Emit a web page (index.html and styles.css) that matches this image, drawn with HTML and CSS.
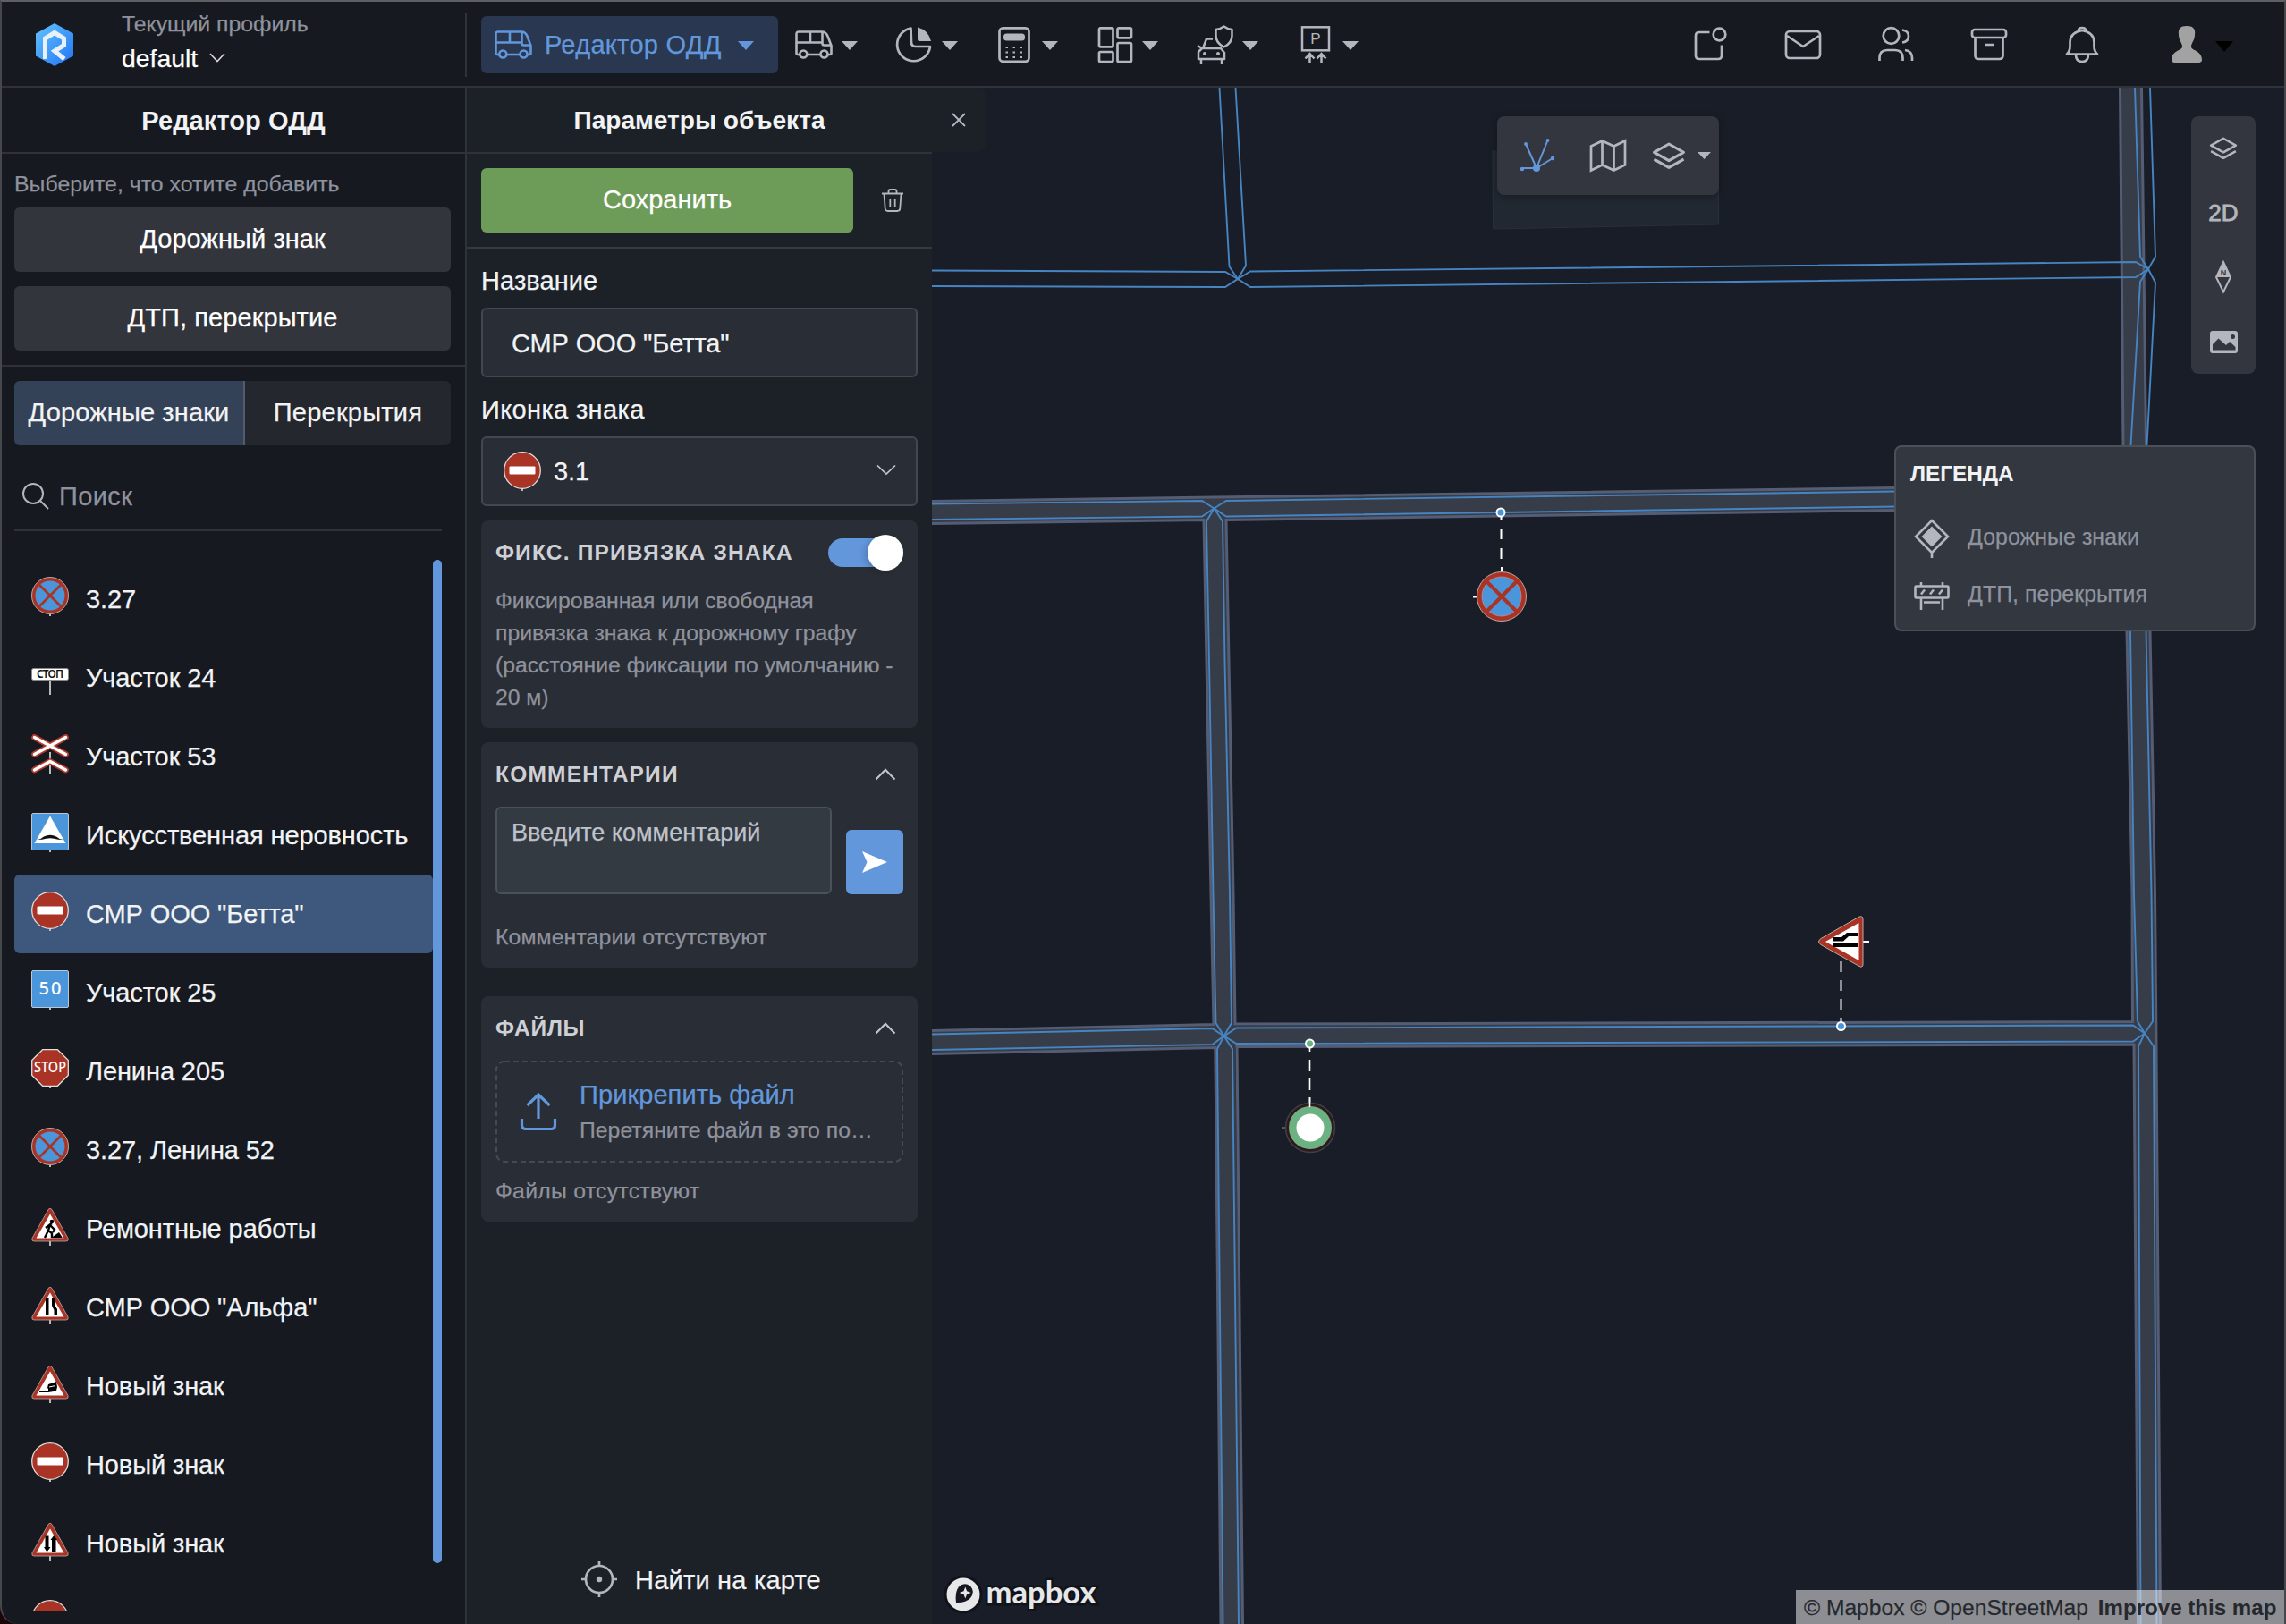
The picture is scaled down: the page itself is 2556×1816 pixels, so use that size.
FILE: index.html
```html
<!DOCTYPE html>
<html lang="ru">
<head>
<meta charset="utf-8">
<title>Редактор ОДД</title>
<link rel="stylesheet" href="styles.css">
</head>
<body>
<svg class="defs" aria-hidden="true">
  <defs>
    <linearGradient id="logo-fill" x1="0" y1="0" x2="1" y2="1">
      <stop offset="0" stop-color="#62c4ff"/><stop offset="1" stop-color="#2273f4"/>
    </linearGradient>
    <symbol id="bus" viewBox="0 0 42 32">
      <g fill="none" stroke="currentColor" stroke-width="2.6" stroke-linejoin="round">
        <path d="M5 27H3q-1.500 0-1.500-1.500V4q0-2.500 2.500-2.500H30q4.500 0 6.500 5L40.500 17v8.500q0 1.500-1.500 1.500H37M13.500 27H28M1.500 13.500H30M17 1.500v12M30.500 1.500v13q0 2 2 2H40"/>
        <circle cx="9.300" cy="26.500" r="4"/><circle cx="32.500" cy="26.500" r="4"/>
      </g>
    </symbol>
    <symbol id="layers" viewBox="0 0 36 30">
      <path d="M18 2 34 11 18 20 2 11ZM2 18.500 18 27.500 34 18.500" fill="none" stroke="currentColor" stroke-width="2.900" stroke-linejoin="round"/>
    </symbol>
    <symbol id="s-nostop" viewBox="0 0 42 44">
      <path d="M21 40v4" stroke="#b9b9b9" stroke-width="2"/>
      <circle cx="21" cy="21" r="20.500" fill="#a93426" stroke="#b8aaa6"/>
      <circle cx="21" cy="21" r="16.500" fill="#4b96da"/>
      <path d="M9 9 33 33M33 9 9 33" stroke="#a93426" stroke-width="2.700"/>
    </symbol>
    <symbol id="s-noentry" viewBox="0 0 42 44">
      <path d="M21 40v4" stroke="#b9b9b9" stroke-width="2"/>
      <circle cx="21" cy="21" r="20.300" fill="#a93426" stroke="#ddd" stroke-width="1.300"/>
      <rect x="6.500" y="16.500" width="29" height="9" rx="1" fill="#fff"/>
    </symbol>
    <symbol id="s-stopline" viewBox="0 0 42 44">
      <path d="M21 27v17" stroke="#b9b9b9" stroke-width="2"/>
      <rect x=".5" y="14.500" width="41" height="13" rx="2" fill="#fff" stroke="#888"/>
      <text x="21" y="25.200" class="sign-text" font-size="12" fill="#111" text-anchor="middle" textLength="30">СТОП</text>
    </symbol>
    <symbol id="s-cross" viewBox="0 0 42 44">
      <path d="M21 20v24" stroke="#b9b9b9" stroke-width="2"/>
      <g fill="none" stroke-linecap="round">
        <path d="M3.500 3.500 38.500 22.500M38.500 3.500 3.500 22.500M3.500 40 21 30.500 38.500 40" stroke="#b23a2c" stroke-width="6.800"/>
        <path d="M3.500 3.500 38.500 22.500M38.500 3.500 3.500 22.500M3.500 40 21 30.500 38.500 40" stroke="#fff" stroke-width="3.500"/>
      </g>
    </symbol>
    <symbol id="s-hump" viewBox="0 0 42 44">
      <path d="M21 40v4" stroke="#b9b9b9" stroke-width="2"/>
      <rect x=".5" y=".5" width="41" height="41" rx="1.500" fill="#4b96da" stroke="#bcc6d0"/>
      <path d="M21 3.500 38.500 34H3.500Z" fill="#fff"/>
      <path d="M6 30q5-.5 8-3.500 7-3.500 14 0 3 3 8 3.500l-6-.300q-9-3-18 0Z" fill="#111"/>
    </symbol>
    <symbol id="s-50" viewBox="0 0 42 44">
      <path d="M21 40v4" stroke="#b9b9b9" stroke-width="2"/>
      <rect x=".5" y=".5" width="41" height="41" rx="1.500" fill="#4b96da" stroke="#bcc6d0"/>
      <text x="21" y="27" class="sign-stop" font-size="20" fill="#fff" text-anchor="middle" textLength="25">50</text>
    </symbol>
    <symbol id="s-stop" viewBox="0 0 42 44">
      <path d="M21 40v4" stroke="#b9b9b9" stroke-width="2"/>
      <path d="M12.600.7H29.400L41.300 12.600V29.400L29.400 41.300H12.600L.7 29.400V12.600Z" fill="#a93426" stroke="#ddd" stroke-width="1.300"/>
      <text x="21" y="26" class="sign-stop" font-size="16" fill="#fff" text-anchor="middle" textLength="36" lengthAdjust="spacingAndGlyphs">STOP</text>
    </symbol>
    <symbol id="tri" viewBox="0 0 42 44">
      <path d="M21 38v6" stroke="#b9b9b9" stroke-width="2"/>
      <path d="M19 3.500Q21 .8 23 3.500L41 35.500Q42 39 39 39H3Q0 39 1 35.500Z" fill="#a93426" stroke="#b8aaa6" stroke-width=".8"/>
      <path d="M21 8.500 36.500 35.500H5.500Z" fill="#fff"/>
    </symbol>
    <symbol id="s-works" viewBox="0 0 42 44">
      <use href="#tri"/>
      <circle cx="23" cy="17" r="2.300"/>
      <path d="M23 19 16 24M21 20l-2 7 4 3v5M19 27l-4 8M21 21l5 5-2 3" fill="none" stroke="#000" stroke-width="2.400"/>
      <path d="M22 35.300 31 29l4 6.300Z"/>
    </symbol>
    <symbol id="s-narrow" viewBox="0 0 42 44">
      <use href="#tri"/>
      <path d="M16 14h3.500v20H16ZM23 14h3v8l3 5v7h-3.500v-6L23 23Z"/>
    </symbol>
    <symbol id="s-shoulder" viewBox="0 0 42 44">
      <use href="#tri"/>
      <path d="M9 30h10v-2l-1-1 1-4 9-3 1 6-1 4-3 1-6 1H9Z"/>
      <path d="M20 26l7-1.500" stroke="#fff"/>
    </symbol>
    <symbol id="s-twoway" viewBox="0 0 42 44">
      <use href="#tri"/>
      <path d="M15.500 16.500h4V29h2l-4 5.500L14 29h1.500ZM23 34v-13h-1.500l3.800-5 3.700 5h-1.500v13Z"/>
    </symbol>
    <symbol id="chev-up" viewBox="0 0 24 14">
      <path d="M1.500 12.500 12 1.800 22.500 12.500" fill="none" stroke="#c4c6cc" stroke-width="2"/>
    </symbol>
  </defs>
</svg>

<div class="window">
  <header class="header">
    <div class="profile">
      <svg class="logo" viewBox="0 0 42 48">
        <path d="M21 0 42 11.500V36.500L21 48 0 36.500V11.500Z" fill="url(#logo-fill)"/>
        <path d="M10.500 40V17L21 10.500 31.500 17V24.500L21 31 32 40" fill="none" stroke="#e8f1f8" stroke-width="5"/>
      </svg>
      <div class="profile-text">
        <span class="profile-label">Текущий профиль</span>
        <span class="profile-name">default
          <svg width="18" height="11" viewBox="0 0 18 11"><path d="M1 1l8 8.500L17 1" fill="none" stroke="#d5d6da" stroke-width="1.600"/></svg>
        </span>
      </div>
    </div>
    <nav class="nav">
      <a class="nav-active">
        <svg width="42" height="32"><use href="#bus"/></svg>
        <span>Редактор ОДД</span>
        <i class="caret"></i>
      </a>
      <div class="nav-items">
        <a class="nav-item"><svg width="44" height="32"><use href="#bus"/></svg><i class="caret"></i></a>
        <a class="nav-item"><svg width="44" height="42" viewBox="0 0 44 42">
          <path d="M18.500 2.500A18.500 18.500 0 1 0 40 23H24q-5 0-5-5Z" fill="none" stroke="currentColor" stroke-width="2.700" stroke-linejoin="round"/>
          <path d="M26 1.500q12 3 15 15.500H28q-2 0-2-2Z" fill="currentColor"/></svg><i class="caret"></i></a>
        <a class="nav-item"><svg width="44" height="42" viewBox="0 0 44 42">
          <rect x="5.500" y="2.300" width="33" height="37.500" rx="4" fill="none" stroke="currentColor" stroke-width="2.700"/>
          <rect x="10" y="8.500" width="24" height="8" rx="3.500" fill="currentColor"/>
          <path d="M12.500 24h2.500m5.500 0h2.500m5.500 0h2.500M12.500 29.500h2.500m5.500 0h2.500m5.500 0h2.500M12.500 35h2.500m5.500 0h2.500m5.500 0h2.500" stroke="currentColor" stroke-width="2"/></svg><i class="caret"></i></a>
        <a class="nav-item"><svg width="44" height="42" viewBox="0 0 44 42">
          <g fill="none" stroke="currentColor" stroke-width="2.700"><rect x="5" y="2.300" width="15.500" height="21" rx="1.500"/><rect x="25.500" y="2.300" width="15.500" height="11" rx="1.500"/><rect x="5" y="29" width="15.500" height="11" rx="1.500"/><rect x="25.500" y="19" width="15.500" height="21" rx="1.500"/></g></svg><i class="caret"></i></a>
        <a class="nav-item"><svg width="44" height="44" viewBox="0 0 44 44">
          <g fill="none" stroke="currentColor" stroke-width="2.500" stroke-linejoin="round">
            <path d="M32.500 1.500q4 3 9 3.500v7q0 8-9 12.500-9-4.500-9-12.500V5q5-.5 9-3.500Z"/>
            <path d="M20 15.500h-7L9 26h20l4 5v7H4v-8l4-4-5-3M7 38v6M30 38v6"/></g>
          <circle cx="11" cy="32" r="2" fill="currentColor"/><circle cx="26" cy="32" r="2" fill="currentColor"/></svg><i class="caret"></i></a>
        <a class="nav-item"><svg width="44" height="44" viewBox="0 0 44 44">
          <rect x="8" y="2.300" width="30" height="26" fill="none" stroke="currentColor" stroke-width="2.500"/>
          <text x="23" y="21" font-size="17" fill="currentColor" text-anchor="middle">P</text>
          <path d="M16.500 43V33M11.500 37.500 16.500 32l5 5.500M29.500 43V33M24.500 37.500 29.500 32l5 5.500" fill="none" stroke="currentColor" stroke-width="2.500"/></svg><i class="caret"></i></a>
      </div>
    </nav>
    <div class="tools">
      <svg viewBox="0 0 44 44"><g fill="none" stroke="currentColor" stroke-width="2.700"><path d="M21.500 8H10q-4 0-4 4v22q0 4 4 4H31q4 0 4-4V22.500"/><circle cx="32.500" cy="10.500" r="6.800"/></g></svg>
      <svg viewBox="0 0 44 44"><g fill="none" stroke="currentColor" stroke-width="2.700"><rect x="3" y="7" width="38" height="30" rx="4"/><path d="M4 12 22 24 40 12"/></g></svg>
      <svg viewBox="0 0 44 44"><g fill="none" stroke="currentColor" stroke-width="2.700"><circle cx="16.500" cy="12" r="8.800"/><path d="M29 5.500q7 1 7 7t-7 7M3.500 40v-3Q3.500 28 12 28h9q8.500 0 8.500 9v3M32 28q8 1 8 9v3"/></g></svg>
      <svg viewBox="0 0 44 44"><g fill="none" stroke="currentColor" stroke-width="2.700"><rect x="3" y="5" width="38" height="9" rx="3"/><path d="M6.500 14v20q0 4 4 4h23q4 0 4-4V14M17 22H27"/></g></svg>
      <svg viewBox="0 0 44 44"><g fill="none" stroke="currentColor" stroke-width="2.700" stroke-linejoin="round"><path d="M5 32.500q3.500-3 3.500-9V19Q9 8 22 6 35 8 35.500 19v4.500q0 6 3.500 9ZM18 6q0-3 4-3t4 3M15 33q0 8 7 8t7-8"/></g></svg>
    </div>
    <div class="user">
      <svg width="34" height="42" viewBox="0 0 34 42"><path d="M17 0c7 0 10 3 9 10 0 6-4 9-4 13 0 5 12 4 12 15 0 3-3 4-17 4S0 41 0 38C0 27 12 28 12 23c0-4-4-7-4-13C7 3 10 0 17 0Z" fill="#a2a2a2"/></svg>
      <i class="caret caret-dark"></i>
    </div>
  </header>

  <div class="body">
    <aside class="sidebar">
      <h1 class="title">Редактор ОДД</h1>
      <section class="add">
        <p class="hint">Выберите, что хотите добавить</p>
        <button class="btn">Дорожный знак</button>
        <button class="btn">ДТП, перекрытие</button>
      </section>
      <div class="tabs">
        <span class="tab tab-on">Дорожные знаки</span>
        <span class="tab">Перекрытия</span>
      </div>
      <div class="search">
        <svg width="30" height="30" viewBox="0 0 30 30"><g fill="none" stroke="#b4b6be" stroke-width="2"><circle cx="12" cy="12" r="11"/><path d="M20 20 29 29"/></g></svg>
        <span>Поиск</span>
      </div>
      <div class="list">
        <ul class="rows">
          <li class="row"><svg><use href="#s-nostop"/></svg>3.27</li>
          <li class="row"><svg><use href="#s-stopline"/></svg>Участок 24</li>
          <li class="row"><svg><use href="#s-cross"/></svg>Участок 53</li>
          <li class="row"><svg><use href="#s-hump"/></svg>Искусственная неровность</li>
          <li class="row row-on"><svg><use href="#s-noentry"/></svg>СМР ООО "Бетта"</li>
          <li class="row"><svg><use href="#s-50"/></svg>Участок 25</li>
          <li class="row"><svg><use href="#s-stop"/></svg>Ленина 205</li>
          <li class="row"><svg><use href="#s-nostop"/></svg>3.27, Ленина 52</li>
          <li class="row"><svg><use href="#s-works"/></svg>Ремонтные работы</li>
          <li class="row"><svg><use href="#s-narrow"/></svg>СМР ООО "Альфа"</li>
          <li class="row"><svg><use href="#s-shoulder"/></svg>Новый знак</li>
          <li class="row"><svg><use href="#s-noentry"/></svg>Новый знак</li>
          <li class="row"><svg><use href="#s-twoway"/></svg>Новый знак</li>
          <li class="row"><svg><use href="#s-noentry"/></svg></li>
        </ul>
        <div class="scrollbar"></div>
      </div>
    </aside>

    <section class="panel">
      <h2 class="title title-panel">Параметры объекта</h2>
      <div class="actions">
        <button class="save">Сохранить</button>
        <svg class="trash" width="24" height="26" viewBox="0 0 24 26"><g fill="none" stroke="#b4b6be" stroke-width="1.800"><path d="M0 5.500H24M7.500 5V3q0-2 2-2h5q2 0 2 2v2M2.500 6l1.200 16q.2 3 3 3h10.600q2.800 0 3-3L21.500 6M9.300 11v9M14.700 11v9"/></g></svg>
      </div>
      <div class="form">
        <label class="label">Название</label>
        <div class="input">СМР ООО "Бетта"</div>
        <label class="label label-icon">Иконка знака</label>
        <div class="input select">
          <svg width="42" height="44"><use href="#s-noentry"/></svg>
          <span>3.1</span>
          <svg class="select-arrow" width="22" height="13" viewBox="0 0 22 13"><path d="M1 1.500 11 11 21 1.500" fill="none" stroke="#c4c6cc" stroke-width="1.700"/></svg>
        </div>
        <div class="card card-fix">
          <div class="card-head"><h3>ФИКС. ПРИВЯЗКА ЗНАКА</h3><span class="toggle"><i></i></span></div>
          <p class="muted desc">Фиксированная или свободная<br>привязка знака к дорожному графу<br>(расстояние фиксации по умолчанию -<br>20 м)</p>
        </div>
        <div class="card card-comments">
          <div class="card-head"><h3>КОММЕНТАРИИ</h3><svg class="chev" width="24" height="14"><use href="#chev-up"/></svg></div>
          <div class="comment">
            <div class="textarea">Введите комментарий</div>
            <button class="send"><svg width="28" height="24" viewBox="0 0 28 24"><path d="M0 0 28 12 0 24 5.500 12Z" fill="#fff"/></svg></button>
          </div>
          <p class="muted empty">Комментарии отсутствуют</p>
        </div>
        <div class="card card-files">
          <div class="card-head"><h3 class="files-title">ФАЙЛЫ</h3><svg class="chev" width="24" height="14"><use href="#chev-up"/></svg></div>
          <div class="drop">
            <svg class="drop-border" width="456" height="114"><rect x="1" y="1" width="454" height="112" rx="9" fill="none" stroke="#474a52" stroke-width="2" stroke-dasharray="6 4"/></svg>
            <svg width="40" height="42" viewBox="0 0 40 42"><path d="M20 29V2M7.500 14 20 2 32.500 14M1.500 29v7q0 4.500 4.500 4.500H34q4.500 0 4.500-4.500v-7" fill="none" stroke="#6297db" stroke-width="3.200"/></svg>
            <div class="drop-text"><span class="drop-link">Прикрепить файл</span><span class="drop-note">Перетяните файл в это по…</span></div>
          </div>
          <p class="muted empty-files">Файлы отсутствуют</p>
        </div>
      </div>
      <div class="find">
        <svg width="40" height="40" viewBox="0 0 40 40"><g fill="none" stroke="#b4b6be" stroke-width="2.700"><circle cx="20" cy="20" r="15"/><path d="M20 0V6M20 34v6M0 20H6M34 20h6"/></g><circle cx="20" cy="20" r="3.200" fill="#b4b6be"/></svg>
        <span>Найти на карте</span>
      </div>
    </section>

    <main class="map">
      <svg class="roads" viewBox="1042 98 1512 1718">
        <g fill="none" stroke="#363c48">
          <path d="M1042 573 1358 569 2120 558" stroke-width="24"/>
          <path d="M1358 569 1366 1000 1369 1158 1377 1816" stroke-width="24"/>
          <path d="M1042 1165.500 1369 1158.500 2398 1155.500" stroke-width="24"/>
          <path d="M2382.500 98 2387 498 2391 706 2398 1156 2403 1816" stroke-width="24"/>
        </g>
        <g fill="none" stroke="#555d75" stroke-width="3">
          <path d="M1042 560.500 1358 556 2120 545.500"/>
          <path d="M1042 585.500 1346 581.500 1349 740 1354 1000 1357 1145.500 1042 1152.500"/>
          <path d="M1042 1178.500 1359 1171.500 1365 1816"/>
          <path d="M2120 570.500 1371 581.500 1374 740 1379 1000 1381 1145 2384.500 1142.500 2384 1000 2378 706 2374 498 2370.500 98"/>
          <path d="M1389.500 1816 1383 1170.500 2386 1168 2390.500 1816"/>
          <path d="M2394.500 98 2399.500 498 2404 706 2409.500 1000 2411 1168 2415.500 1816"/>
        </g>
        <g fill="none" stroke="#4784c2" stroke-width="1.900">
          <path d="M1363.500 98 1374.500 298 1384 312 1393 297 1381.500 98"/>
          <path d="M1042 302.500 1370 304 1384 312 1398 303.500 2388 293 2402 301 2388 310 1398 321 1384 312 1370 321 1042 320"/>
          <path d="M2387 98 2393 287 2402 301 2410 287 2404 98"/>
          <path d="M2382.500 498 2393 315 2402 301 2410 316 2400.500 498"/>
          <path d="M1042 563.500 1344 560 1357.500 568.500 1371 560 2120 549.500"/>
          <path d="M1042 581 1344 577.500 1357.500 568.500 1371 577.500 2120 566.500"/>
          <path d="M1357.500 568.500 1349 583 1352 740 1356.500 1000 1359.500 1144 1368.500 1158.500 1377 1144 1375 1000 1369.500 740 1367 583Z"/>
          <path d="M1042 1156.500 1355.500 1150 1368.500 1158.500 1382.500 1149.500 2385 1146.500 2398 1155.500 2385 1164.500 1382.500 1167 1368.500 1158.500 1355.500 1168 1042 1174"/>
          <path d="M1367.500 1816 1361 1173 1368.500 1158.500 1378 1173 1385 1816"/>
          <path d="M2382 706 2386 1000 2390 1142 2398 1155.500 2407 1142 2405.500 1000 2399.500 706"/>
          <path d="M2393.500 1816 2391 1170 2398 1155.500 2408 1170 2411.500 1816"/>
        </g>
        <g stroke="#fff" stroke-width="2">
          <path d="M1678.500 577V582M1678.500 592V603M1678.500 613V625M1679 634V640M1647 667.500h6"/>
          <path d="M2058.500 1075V1087M2058.500 1096V1108M2058.500 1117V1129M2058.500 1138V1143M2083 1053h7"/>
          <path d="M1464.500 1172V1176M1464.500 1185V1198M1464.500 1206V1219M1464.500 1227V1240" stroke-width="1.600"/>
        </g>
        <g stroke="#fff" stroke-width="2">
          <circle cx="1678" cy="573" r="4.500" fill="#4b96da"/><circle cx="2058.500" cy="1147.500" r="4.500" fill="#4b96da"/><circle cx="1464.500" cy="1167" r="4.500" fill="#6cb182"/>
        </g>
        <circle cx="1679" cy="667" r="27.500" fill="#a93426" stroke="#b8aaa6"/>
        <circle cx="1679" cy="667" r="22" fill="#4b96da" stroke="#c08f8c" stroke-width=".8"/>
        <path d="M1663 651 1695 683M1695 651 1663 683" stroke="#a93426" stroke-width="4"/>
        <path d="M2036 1049.500 2078 1025.500Q2083 1023 2083 1028V1078Q2083 1083 2078 1080L2036 1056.500Q2031 1053 2036 1049.500Z" fill="#a93426" stroke="#b8aaa6"/>
        <path d="M2041 1053 2078.500 1032V1074Z" fill="#fff"/>
        <path d="M2050 1055h27v4h-27ZM2050 1048h9l6-5h12v4h-10l-6 5.500h-11Z" fill="#000"/>
        <circle cx="1465" cy="1261" r="27.500" fill="#30181d" stroke="#3e4049" stroke-width="1.500"/>
        <path d="M1433 1261h4" stroke="#555" stroke-width="2"/>
        <circle cx="1465" cy="1261" r="24" fill="#6cb182"/><circle cx="1465" cy="1261" r="15.500" fill="#fff"/>
        <path d="M1464.500 1227v11" stroke="#fff" stroke-width="1.600"/>
        <path d="M1669 168 1669.500 256 1921.500 251V200" fill="#212831" stroke="#2a3039"/>
      </svg>

      <div class="close"><svg width="16" height="16" viewBox="0 0 16 16"><path d="M1 1 15 15M15 1 1 15" stroke="#b4b6be" stroke-width="1.800"/></svg></div>

      <div class="toolbar">
        <svg width="40" height="38" viewBox="0 0 40 38"><g stroke="#6297db" stroke-width="2" fill="#6297db"><path d="M19 33 7 6M19 33 31.500 2M19 33 37 22M19 33H3"/><circle cx="19" cy="33" r="3"/><circle cx="7" cy="6" r="1"/><circle cx="31.500" cy="2" r="1"/><circle cx="37" cy="22" r="1.200"/><circle cx="3" cy="34" r="1.200"/></g></svg>
        <svg width="42" height="36" viewBox="0 0 42 36"><path d="M2 7.500 14.500 1.500 27.500 7.500 40 1.500V28.500L27.500 34.500 14.500 28.500 2 34.500ZM14.500 1.500v27M27.500 7.500v27" fill="none" stroke="#b4b6be" stroke-width="2.700"/></svg>
        <svg class="tb-layers" width="38" height="31"><use href="#layers"/></svg>
        <i class="caret caret-sm"></i>
      </div>

      <div class="controls">
        <span><svg width="32" height="26"><use href="#layers"/></svg></span>
        <span>2D</span>
        <span><svg width="18" height="36" viewBox="0 0 18 36"><path d="M9 1 17 18 9 34.500 1 18Z" fill="none" stroke="#b4b6be" stroke-width="2"/><path d="M9 1 17 18H1Z" fill="#b4b6be"/><text x="9" y="16" font-size="9" font-weight="700" fill="#33363f" text-anchor="middle">N</text></svg></span>
        <span><svg width="31" height="25" viewBox="0 0 31 25"><rect width="31" height="25" rx="3" fill="#b4b6be"/><path d="M3 21.500V15L9.500 8.500 18 16l4-4 6.500 6v3.500Z" fill="#33363f"/><circle cx="25.500" cy="6.500" r="2.500" fill="#33363f"/></svg></span>
      </div>

      <div class="legend">
        <h4>ЛЕГЕНДА</h4>
        <div class="legend-row">
          <svg width="40" height="44" viewBox="0 0 40 44"><path d="M20 2 38 20 20 38 2 20ZM20 38v6" fill="none" stroke="#b4b6be" stroke-width="2.600"/><path d="M20 8.500 31.500 20 20 31.500 8.500 20Z" fill="#b4b6be"/></svg>
          <span>Дорожные знаки</span>
        </div>
        <div class="legend-row">
          <svg width="40" height="32" viewBox="0 0 40 32"><g fill="none" stroke="#b4b6be" stroke-width="2.600"><rect x="1.500" y="5.500" width="37" height="13" rx="1"/><path d="M8 1v4M32 1v4M8 19v13M32 19v13M11 23.500H29M8 14.500l4-5M18 14.500l4-5M28 14.500l4-5"/></g></svg>
          <span>ДТП, перекрытия</span>
        </div>
      </div>

      <svg class="mapbox" width="180" height="52" viewBox="0 0 180 52">
        <circle cx="25" cy="26" r="21.500" fill="#10131a"/><circle cx="25" cy="26" r="18.500" fill="#e6e7e9"/>
        <path d="M17 35q-1.500-12 3-17.500 6-6 13-1 5.500 6.500 0 13.500Q28 35.500 17 35Z" fill="#14171f"/>
        <path d="M27.300 17.500l1.800 4.700 4.700 1.800-4.700 1.800-1.800 4.700-1.800-4.700-4.700-1.800 4.700-1.800Z" fill="#e6e7e9"/>
        <text x="50.500" y="35.500" textLength="123" lengthAdjust="spacingAndGlyphs">mapbox</text>
      </svg>

      <div class="attribution"><span>© Mapbox © OpenStreetMap</span><b>Improve this map</b></div>
    </main>
  </div>
</div>
</body>
</html>
```
FILE: styles.css
```css
* { box-sizing: border-box; }

body {
  margin: 0;
  background: #1b0508;
  font: 29px/32px "Liberation Sans", Arial, sans-serif;
  letter-spacing: .08px;
  -webkit-text-stroke: .25px;
  color: #f2f3f5;
}

h1, h2, h3, h4, p, ul { margin: 0; padding: 0; }
button { font: inherit; letter-spacing: inherit; color: inherit; border: 0; padding: 0; }
svg { flex: none; display: block; overflow: visible; }
svg text { -webkit-text-stroke: 0; }
b, h1, h2, h3, h4 { -webkit-text-stroke: 0; }
.defs { position: absolute; width: 0; height: 0; }

.window {
  width: 2556px;
  height: 1816px;
  display: flex;
  flex-direction: column;
  overflow: hidden;
  background: #161920;
  border: 2px solid #45474b;
  border-top-color: #5e6064;
  border-bottom: 0;
  border-bottom-left-radius: 20px;
}

/* header */
.header {
  height: 96px;
  flex: none;
  display: flex;
  align-items: center;
  border-bottom: 2px solid #303237;
  color: #b4b6be;
}
.profile {
  width: 520px;
  height: 72px;
  margin-top: 2px;
  display: flex;
  align-items: center;
  gap: 54px;
  padding-left: 38px;
  border-right: 2px solid #303237;
}
.logo { width: 42px; height: 48px; }
.profile-text { display: flex; flex-direction: column; gap: 6px; margin-top: -9px; }
.profile-label { font-size: 24.8px; letter-spacing: 0; color: #8f929d; }
.profile-name { display: flex; align-items: center; gap: 13px; font-size: 28.4px; letter-spacing: 0; color: #fff; }
.nav { display: flex; align-items: center; padding-left: 16px; }
.nav-active {
  width: 332px;
  height: 64px;
  margin-top: 2px;
  display: flex;
  align-items: center;
  padding-left: 15px;
  border-radius: 6px;
  background: #293850;
  color: #6297db;
}
.nav-active span { width: 230px; padding-left: 14px; margin-top: -1px; letter-spacing: .3px; }
.nav-items { display: flex; gap: 41px; padding-left: 18px; }
.nav-item { width: 71px; display: flex; align-items: center; justify-content: space-between; height: 48px; margin-top: 2px; }
.caret {
  width: 18px;
  height: 10px;
  margin-top: 2px;
  background: currentColor;
  clip-path: polygon(0 0, 100% 0, 50% 100%);
}
.caret-dark { width: 20px; height: 12px; background: #000; margin-top: 4px; }
.caret-sm { width: 15px; height: 8px; background: #b4b6be; }
.tools { margin-left: auto; display: flex; gap: 60px; margin-top: 2px; }
.tools svg { width: 44px; height: 44px; }
.user { display: flex; align-items: center; gap: 15px; padding: 2px 57px 0 78px; }

.body { flex: 1; display: flex; min-height: 0; }

/* left sidebar */
.sidebar {
  width: 520px;
  flex: none;
  display: flex;
  flex-direction: column;
  border-right: 2px solid #303237;
}
.title {
  height: 74px;
  flex: none;
  padding-top: 21px;
  font-size: 29px;
  line-height: 32px;
  text-align: center;
  border-bottom: 2px solid #303237;
}
.title-panel { font-size: 28.1px; letter-spacing: 0; }
.add {
  display: flex;
  flex-direction: column;
  gap: 16px;
  padding: 18px 16px 16px 14px;
  border-bottom: 2px solid #303237;
}
.hint { font-size: 24.8px; line-height: 32px; margin-bottom: -6px; letter-spacing: .04px; color: #8f929d; }
.btn { height: 72px; padding-bottom: 3px; border-radius: 6px; background: #33353c; color: #fff; }
.tabs { display: flex; margin: 16px 16px 0 14px; border-radius: 6px; overflow: hidden; background: #25272e; }
.tab { flex: 1; height: 72px; line-height: 71px; text-align: center; letter-spacing: .25px; }
.tab-on { flex: none; width: 258px; background: #344258; border-right: 2px solid #525c6e; letter-spacing: .15px; }
.search {
  display: flex;
  align-items: center;
  gap: 11px;
  height: 96px;
  flex: none;
  margin: 0 26px 0 14px;
  padding: 19px 0 0 9px;
  border-bottom: 2px solid #303237;
  color: #8f929d;
  letter-spacing: .4px;
}
.list { display: flex; height: 1176px; margin: 32px 26px 0 14px; overflow: hidden; }
.rows { flex: 1; list-style: none; letter-spacing: -.1px; }
.row { display: flex; height: 88px; padding: 19px; gap: 19px; line-height: 51px; border-radius: 6px; white-space: nowrap; }
.row svg { width: 42px; height: 44px; }
.row-on { background: #3d587c; }
.scrollbar { width: 10px; height: 1122px; border-radius: 5px; background: #6297db; }
.sign-text { font-family: "Noto Sans", sans-serif; font-weight: 600; letter-spacing: 0; }
.sign-stop { font-family: "Noto Sans", sans-serif; font-weight: 500; letter-spacing: 0; }

/* parameters panel */
.panel { width: 520px; flex: none; display: flex; flex-direction: column; background: #1c2027; }
.actions {
  display: flex;
  align-items: center;
  gap: 32px;
  height: 106px;
  flex: none;
  padding: 0 0 0 16px;
  border-bottom: 2px solid #363940;
}
.save { width: 416px; height: 72px; padding-bottom: 3px; border-radius: 6px; background: #6d9b58; color: #fff; letter-spacing: 0; }
.form { flex: 1; display: flex; flex-direction: column; padding: 20px 16px 0; }
.label { height: 46px; line-height: 33px; }
.label-icon { margin-top: 20px; letter-spacing: .35px; }
.input {
  height: 78px;
  line-height: 76px;
  padding-left: 32px;
  border: 2px solid #44474f;
  border-radius: 6px;
  background: #292d35;
  letter-spacing: -.1px;
}
.select { display: flex; align-items: center; padding-left: 23px; line-height: 75px; }
.select span { padding-left: 14px; }
.select-arrow { margin: -4px 22px 0 auto; }
.card { border-radius: 8px; background: #292d35; padding: 0 16px; }
.card-fix { height: 232px; margin-top: 16px; }
.card-comments { height: 252px; margin-top: 16px; }
.card-files { height: 252px; margin-top: 32px; }
.card-head { display: flex; align-items: center; justify-content: space-between; height: 72px; }
.card h3 { font-size: 24.5px; line-height: 28px; letter-spacing: 1.200px; color: #cfd0d5; }
.card .files-title { letter-spacing: .700px; }
.toggle { width: 84px; height: 32px; border-radius: 16px; background: #6297db; display: flex; align-items: center; justify-content: flex-end; }
.toggle i { width: 40px; height: 40px; border-radius: 50%; background: #fff; box-shadow: -4px 2px 6px rgba(0, 0, 0, .15); }
.muted { font-size: 24.800px; letter-spacing: .1px; color: #8f929d; }
.desc { line-height: 36px; letter-spacing: -.04px; }
.chev { margin-right: 8px; }
.comment { display: flex; align-items: flex-end; gap: 16px; }
.textarea {
  width: 376px;
  height: 98px;
  padding: 11px 16px;
  font-size: 27px;
  letter-spacing: 0;
  border: 2px solid #4c5058;
  border-radius: 6px;
  background: #343a42;
  color: #bfc2c9;
}
.send { width: 64px; height: 72px; border-radius: 6px; background: #6297db; display: flex; align-items: center; justify-content: center; }
.empty { margin-top: 32px; }
.drop { position: relative; height: 114px; display: flex; align-items: center; gap: 26px; padding-left: 28px; }
.drop-border { position: absolute; inset: 0; }
.drop-text { display: flex; flex-direction: column; gap: 8px; margin-top: 2px; }
.drop-link { color: #6297db; }
.drop-note { font-size: 24.8px; letter-spacing: 0; color: #8f929d; }
.empty-files { margin-top: 16px; letter-spacing: .25px; }
.find { display: flex; align-items: center; justify-content: center; gap: 20px; height: 40px; margin-bottom: 30px; padding-left: 4px; letter-spacing: .2px; }
.find span { margin-top: 1px; }

/* map */
.map { position: relative; flex: 1; background: #191d27; overflow: hidden; }
.roads { position: absolute; left: 0; top: 0; width: 1512px; height: 1718px; }
.close {
  position: absolute;
  left: 0;
  top: 0;
  width: 60px;
  height: 72px;
  padding: 28px 22px;
  border-radius: 0 8px 8px 0;
  background: #1c2027;
}
.toolbar {
  position: absolute;
  left: 632px;
  top: 32px;
  width: 248px;
  height: 88px;
  display: flex;
  align-items: center;
  padding-left: 25px;
  gap: 38px;
  border-radius: 8px;
  background: #33363f;
  box-shadow: 0 2px 8px rgba(0, 0, 0, .3);
}
.tb-layers { margin-left: -10px; color: #b4b6be; }
.toolbar .caret { margin: 0 0 0 -25px; }
.controls {
  position: absolute;
  right: 32px;
  top: 32px;
  width: 72px;
  height: 288px;
  display: flex;
  flex-direction: column;
  border-radius: 8px;
  background: #33363f;
  color: #b4b6be;
  font-size: 26px;
  -webkit-text-stroke: .8px;
}
.controls span { height: 72px; display: flex; align-items: center; justify-content: center; }
.legend {
  position: absolute;
  right: 32px;
  top: 400px;
  width: 404px;
  height: 208px;
  padding: 14px 16px;
  border: 2px solid #4b4f57;
  border-radius: 8px;
  background: #333740;
  font-size: 24.900px;
  letter-spacing: .05px;
}
.legend h4 { font-size: 24.300px; line-height: 32px; letter-spacing: 0; margin-bottom: 24px; }
.legend-row { display: flex; align-items: center; height: 64px; gap: 20px; padding-left: 4px; color: #8f929d; }
.legend-row span { margin-top: -4px; }
.mapbox {
  position: absolute;
  left: 10px;
  bottom: 7px;
  font: 700 34px Lato, sans-serif;
  letter-spacing: 0;
  fill: #e6e7e9;
}
.mapbox text { stroke: #10131a; stroke-width: 5px; paint-order: stroke; }
.attribution {
  position: absolute;
  right: 0;
  bottom: 0;
  width: 546px;
  height: 38px;
  padding-left: 9px;
  display: flex;
  gap: 11px;
  line-height: 39px;
  font-size: 24.600px;
  letter-spacing: 0;
  white-space: nowrap;
  background: rgba(255, 255, 255, .5);
  color: #26282c;
}
.attribution b { font-size: 24.100px; }
```
